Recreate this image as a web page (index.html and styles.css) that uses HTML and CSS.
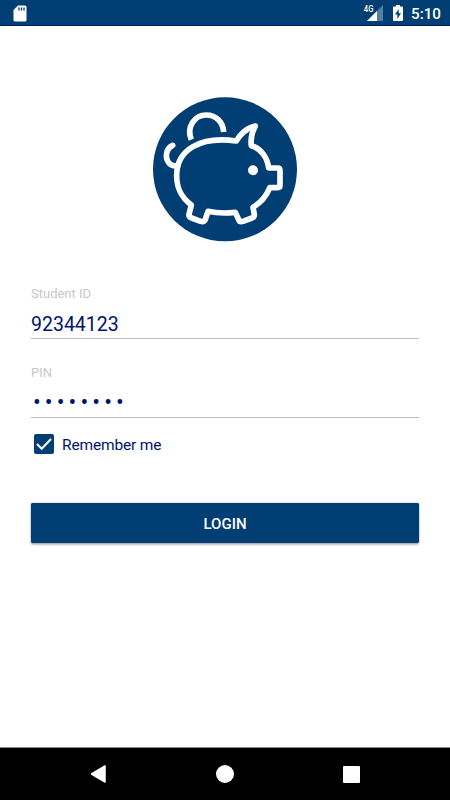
FILE: index.html
```html
<!DOCTYPE html>
<html lang="en">

<head>
	<meta charset="utf-8">
	<title>Login</title>
	<link rel="stylesheet" href="styles.css">
</head>

<body>
	<header class="status-bar">
		<svg class="sd-card" width="14" height="17" viewBox="0 0 14 17">
			<path d="M5 .5h7A1.5 1.5 0 0 1 13.500 2v13a1.500 1.500 0 0 1-1.500 1.500H2A1.500 1.500 0 0 1 .5 15V5z" fill="#fff"/>
			<path d="M6 2.500v3M8.500 2.500v3M11 2.500v3" stroke="#003e73" stroke-width="1.300"/>
		</svg>
		<span class="network">4G</span>
		<svg class="signal" width="16" height="16" viewBox="0 0 16 16">
			<path d="M16 0v16H0z" fill="#557fa3"/>
			<path d="M10 6v10H0z" fill="#fff"/>
		</svg>
		<svg class="battery" width="10" height="16" viewBox="0 0 10 16">
			<path d="M3 0h4v1.500h2a1 1 0 0 1 1 1V15a1 1 0 0 1-1 1H1a1 1 0 0 1-1-1V2.500a1 1 0 0 1 1-1h2z" fill="#fff"/>
			<path d="M5.700 4L2 9.500h2.400V14L8 8.300H5.700z" fill="#003e73"/>
		</svg>
		<span class="clock">5:10</span>
	</header>

	<main class="content">
		<svg class="logo" width="160" height="160" viewBox="0 0 480 480">
			<circle cx="240" cy="238" r="216" fill="#003e73"/>
			<g fill="none" stroke="#fff" stroke-width="17" stroke-linejoin="round">
				<path d="M274 153C284 134 306 113 331 108C320 128 316 146 319 167C349 176 367 203 371 234H398Q405 234 405 241V286Q405 293 398 293H374C365 317 348 337 324 352L328 374Q328 381 321 384L294 394Q284 397 281 389L271 367C246 370 216 370 189 364L181 388Q177 397 167 394L140 384Q131 381 132 373L139 345C105 319 94 291 95 253C97 181 164 137 274 153Z"/>
				<path d="M139 149C124 113 147 75 184 75C213 75 234 96 236 126"/>
				<path d="M83 166C62 176 58 205 74 221Q82 229 98 227" stroke-linecap="round"/>
			</g>
			<circle cx="324" cy="241" r="15" fill="#fff"/>
		</svg>

		<form class="login-form">
			<label class="label" for="student">Student ID</label>
			<input class="field" id="student" type="text" value="92344123">
			<label class="label" for="pin">PIN</label>
			<input class="field pin" id="pin" type="password" value="12345678">
			<div class="remember">
				<svg class="checkbox" width="20" height="20" viewBox="0 0 20 20">
					<rect width="20" height="20" rx="2" fill="#003e73"/>
					<path d="M3 10l4.700 4.700L17 5" fill="none" stroke="#fff" stroke-width="2"/>
				</svg>
				<span>Remember me</span>
			</div>
			<button class="login" type="button">LOGIN</button>
		</form>
	</main>

	<nav class="nav-bar">
		<svg width="18" height="20" viewBox="0 0 18 20">
			<path d="M1.500 10L15 2v16z" fill="#fff" stroke="#fff" stroke-width="1.500" stroke-linejoin="round"/>
		</svg>
		<svg width="18" height="18" viewBox="0 0 18 18">
			<circle cx="9" cy="9" r="9" fill="#fff"/>
		</svg>
		<svg width="18" height="17" viewBox="0 0 18 17">
			<rect x="1" width="17" height="17" rx="1" fill="#fff"/>
		</svg>
	</nav>
</body>

</html>
```

FILE: styles.css
```css
* {
	box-sizing: border-box;
}

body {
	display: flex;
	flex-direction: column;
	height: 800px;
	margin: 0;
	background-color: #fff;
	color: #00146e;
	font-family: Roboto, sans-serif;
}

.status-bar {
	display: flex;
	align-items: center;
	height: 26px;
	padding: 1px 9px 0 13px;
	background-color: #003e73;
	border-bottom: 1px solid #002060;
	color: #fff;
}

.network {
	align-self: flex-start;
	margin: 3px -7px 0 auto;
	font-size: 9px;
	line-height: 10px;
	font-weight: 500;
	transform: scaleX(0.85);
}

.battery {
	margin: 0 8px 0 10px;
}

.clock {
	padding-top: 1px;
	font-size: 15.2px;
	font-weight: 500;
}

.content {
	flex: 1;
	padding: 64px 31px 0 31px;
}

.logo {
	display: block;
	margin: 0 auto 36px 114px;
}

.login-form {
	display: flex;
	flex-direction: column;
}

.label {
	height: 16px;
	color: #c8c8c8;
	font-size: 13px;
	line-height: 16px;
}

.field {
	height: 37px;
	margin: 0 0 26px;
	padding: 8px 0 0;
	border: 0;
	border-bottom: 1px solid #bebebe;
	outline: none;
	color: #00146e;
	font-family: Roboto, sans-serif;
	font-size: 19.5px;
}

.pin {
	margin-bottom: 16px;
	padding: 6px 0 0 2px;
	font-size: 23px;
	letter-spacing: 4.1px;
}

.remember {
	display: flex;
	align-items: center;
	gap: 8px;
	height: 20px;
	margin-bottom: 49px;
	padding-left: 3px;
	font-size: 15.5px;
	letter-spacing: -0.15px;
}

.remember span {
	padding-top: 1px;
}

.login {
	height: 40px;
	padding: 2px 0 0;
	border: 0;
	border-radius: 2px;
	background-color: #003e73;
	box-shadow: 0 2px 2px rgba(0, 0, 0, 0.25), 0 0 1px #001478;
	color: #fff;
	font-family: Roboto, sans-serif;
	font-size: 15px;
	font-weight: 500;
}

.nav-bar {
	display: flex;
	align-items: center;
	justify-content: space-between;
	height: 53px;
	padding: 0 90px;
	border-top: 1px solid #888;
	background-color: #000;
}
```
